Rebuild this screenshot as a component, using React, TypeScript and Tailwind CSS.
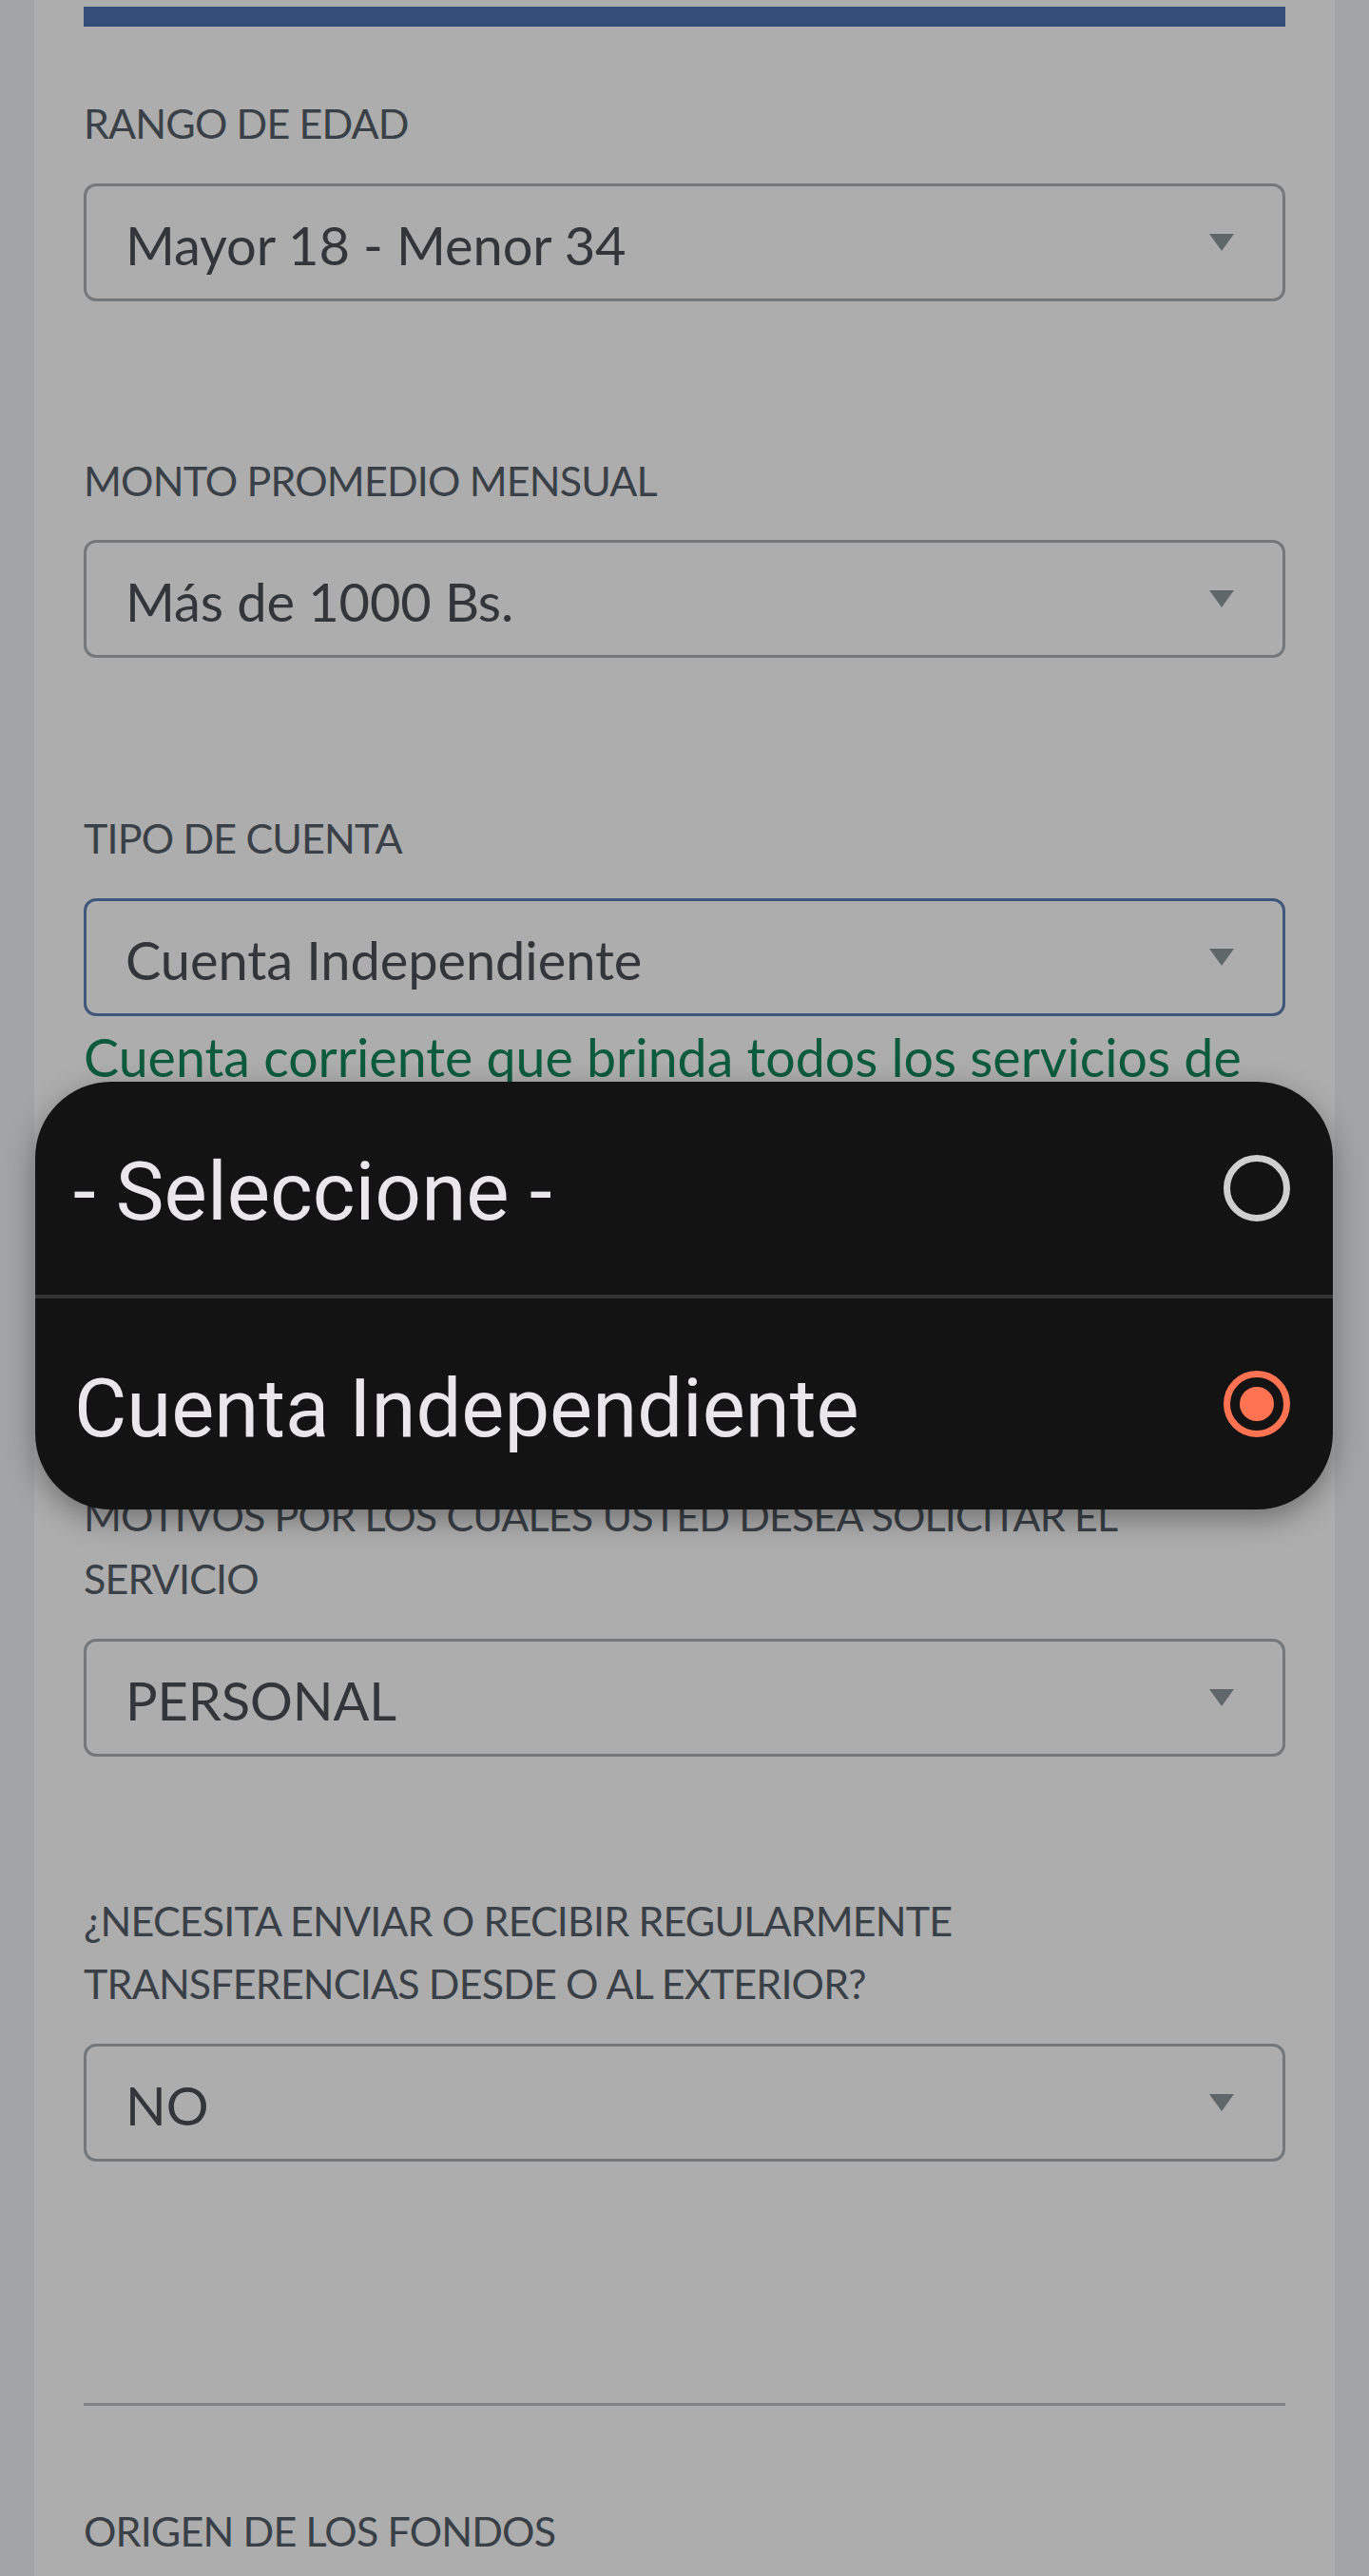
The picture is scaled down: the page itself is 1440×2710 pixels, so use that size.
import React from "react";

interface FieldProps {
  label: string;
  value: string;
  focused?: boolean;
  className?: string;
}

function Chevron() {
  return (
    <svg width="26" height="18" viewBox="0 0 26 18" className="shrink-0">
      <polygon points="0,0 26,0 13,18" fill="#5f676b" />
    </svg>
  );
}

function SelectField({ label, value, focused, className = "" }: FieldProps) {
  return (
    <div className={className}>
      <label className="block text-[43px] leading-[66.5px] tracking-[-0.85px] text-[#3a4047] uppercase">
        {label}
      </label>
      <div
        className={`mt-[29px] h-[124px] rounded-[13px] border-[3px] flex items-center justify-between pl-[41px] pr-[51px] ${
          focused ? "border-[#3e5679]" : "border-[#74787b]"
        }`}
      >
        <span className="text-[56px] leading-none tracking-[-0.1px] text-[#32363a] mt-[6px]">{value}</span>
        <Chevron />
      </div>
    </div>
  );
}

function Radio({ checked }: { checked?: boolean }) {
  return (
    <span
      className={`w-[70px] h-[70px] rounded-full border-[7px] flex items-center justify-center shrink-0 ${
        checked ? "border-[#ff7352]" : "border-[#cfcfcf]"
      }`}
    >
      {checked && <span className="w-[36px] h-[36px] rounded-full bg-[#ff7352]" />}
    </span>
  );
}

export default function App() {
  return (
    <div className="relative min-h-[2710px] bg-[#a3a4a8] px-[36px] font-['Lato',sans-serif] overflow-hidden">
      <div className="min-h-[2710px] bg-[#adadad] px-[52px] pt-[7px]">
        {/* header bar */}
        <div className="h-[21px] bg-[#344e78]" />

        <SelectField className="mt-[69px]" label="Rango de edad" value="Mayor 18 - Menor 34" />
        <SelectField className="mt-[156px]" label="Monto promedio mensual" value="Más de 1000 Bs." />
        <SelectField className="mt-[157px]" label="Tipo de cuenta" value="Cuenta Independiente" focused />

        {/* help text, mostly covered by the popup */}
        <p className="mt-[3px] h-[490px] text-[55.5px] leading-[80px] text-[#0c5b3d] overflow-hidden">
          Cuenta corriente que brinda todos los servicios de
        </p>

        <SelectField
          label="Motivos por los cuales usted desea solicitar el servicio"
          value="PERSONAL"
        />
        <SelectField
          className="mt-[140px]"
          label="¿Necesita enviar o recibir regularmente transferencias desde o al exterior?"
          value="NO"
        />

        <div className="mt-[254px] h-[3px] bg-[#808386]" />

        <label className="block mt-[99px] text-[43px] leading-[66.5px] tracking-[-0.85px] text-[#3a4047] uppercase">
          Origen de los fondos
        </label>
      </div>

      {/* native select popup */}
      <div className="absolute top-[1138px] left-[37px] right-[38px] h-[450px] rounded-[80px] bg-[#131313] shadow-[0_10px_30px_rgba(0,0,0,0.35)] overflow-hidden font-['Roboto',sans-serif] text-[#e9e6ec]">
        <div className="h-[224px] flex items-center justify-between pl-[40px] pr-[45px]">
          <span className="text-[85.5px] leading-none mt-[9px]">- Seleccione -</span>
          <Radio />
        </div>
        <div className="h-[4px] bg-[#333333]" />
        <div className="h-[222px] flex items-center justify-between pl-[41px] pr-[45px]">
          <span className="text-[85px] leading-none mt-[10px]">Cuenta Independiente</span>
          <Radio checked />
        </div>
      </div>
    </div>
  );
}
